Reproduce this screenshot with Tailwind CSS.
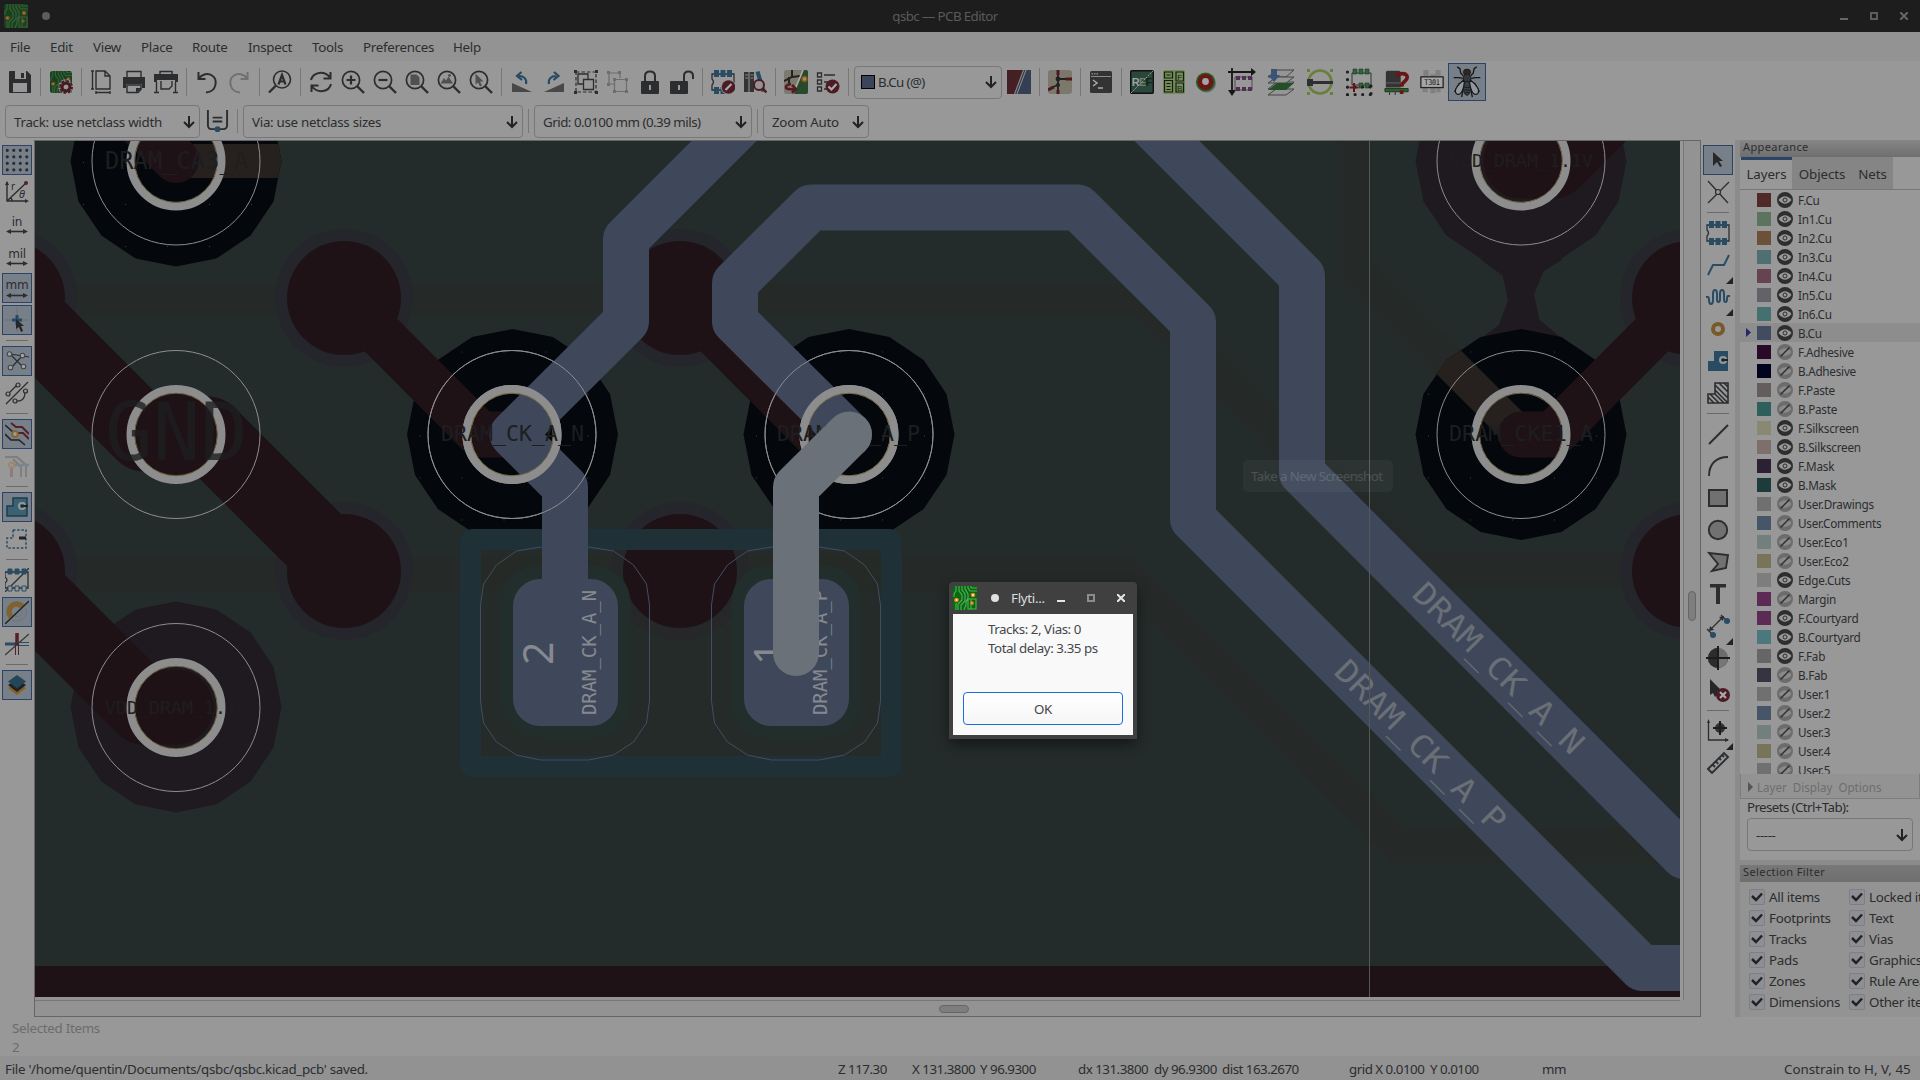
<!DOCTYPE html>
<html lang="en">
<head>
<meta charset="utf-8">
<title>qsbc — PCB Editor</title>
<script src="https://cdn.jsdelivr.net/npm/@tailwindcss/browser@4"></script>
</head>
<body class="w-[1920px] h-[1080px] overflow-hidden bg-[#989898] text-[#2b2d2f] text-[13.33px] leading-[18px] tracking-[-0.28px] font-['Noto_Sans',sans-serif] relative flex flex-col">

<svg class="hidden">
  <defs>
  <symbol id="app" viewBox="0 0 24 24"><rect width="24" height="24" rx="3" fill="#046b10"/><g fill="none" stroke="#5aab5d" stroke-width="1.1"><path d="M3 0v5l-2 3v3M6 0v5l3 4v5l-4 4v6M9 0v4l3 4v7l-4 4v5M12 0v3l3 5v4l-2 4v3l-2 5M3 17v7M15 0v2l2 3h7M18 0v2h6M15 13h8v10h-8zM18 13v10"/></g><g fill="#fff0d0" stroke="#e87d10" stroke-width="1.3"><circle cx="20" cy="9" r="1.7"/><circle cx="3.500" cy="14" r="1.700"/><circle cx="19" cy="17" r="1.200"/></g></symbol>
  <symbol id="appd" viewBox="0 0 24 24"><use href="#app"/><rect width="24" height="24" rx="3" fill="#262026" opacity=".55"/></symbol>
  <symbol id="save" viewBox="0 0 24 24"><path fill="currentColor" fill-rule="evenodd" d="M1 2q0-1 1-1h17l4 4v18H2q-1 0-1-1zM7 1v8h11V1h-5v6h3V3h-3V1zM5 13v9h14v-9z"/><path d="M7 2h11v7H7z" fill="#989898"/><path d="M13 3h3v5h-3z" fill="currentColor"/></symbol>
  <symbol id="setup" viewBox="0 0 24 24"><use href="#appd" x="1" y="1" width="22" height="22"/><circle cx="17" cy="17" r="6" fill="none" stroke="#999" stroke-width="3.500" stroke-dasharray="3.400 1.300"/><circle cx="17" cy="17" r="4" fill="none" stroke="#4c1622" stroke-width="2.600"/><circle cx="17" cy="17" r="6" fill="none" stroke="#4c1622" stroke-width="2" stroke-dasharray="2.400 2.300"/><circle cx="17" cy="17" r="2.300" fill="#999"/></symbol>
  <symbol id="page" viewBox="0 0 24 24"><g fill="none" stroke="currentColor" stroke-width="1.400"><path d="M6 1h9l5 5v13H6zM15 1v5h5M2.500 1v18M1 1h3M1 19h3M6 22.500h14M6 21v3M20 21v3"/></g></symbol>
  <symbol id="print" viewBox="0 0 24 24"><path fill="none" stroke="currentColor" stroke-width="1.400" d="M5 7V1.500h14V7M5 15v7.500h11l3-3V15z"/><path fill="currentColor" d="M1 7h22v11h-3v-4H4v4H1zM14 23v-5h6z"/></symbol>
  <symbol id="plot" viewBox="0 0 24 24"><path fill="none" stroke="currentColor" stroke-width="1.400" d="M6 5V1.500h12V5M7 11v8h8l3-3v-5M2.500 12v11M21.500 12v11M0 22.500h5M19 22.500h5"/><path fill="currentColor" d="M0 4h24v8h-3v-2H3v2H0z"/></symbol>
  <symbol id="undo" viewBox="0 0 24 24"><path fill="none" stroke="currentColor" stroke-width="2" d="M3.500 2v7h7M3.500 9C7 4 13 2.500 17 5.500c6 4 5 16-6 17"/></symbol>
  <symbol id="redo" viewBox="0 0 24 24"><g fill="none" stroke="#707070" stroke-width="2"><path d="M20.500 2v7h-7M20.500 9C17 4 11 2.500 7 5.500c-6 4-5 16 6 17"/></g></symbol>
  <symbol id="mag" viewBox="0 0 24 24"><circle cx="10" cy="10" r="8.600" fill="none" stroke="currentColor" stroke-width="1.700"/><path stroke="currentColor" stroke-width="2.400" d="M16 16l7 7"/></symbol>
  <symbol id="find" viewBox="0 0 24 24"><circle cx="14" cy="9.500" r="8.500" fill="none" stroke="currentColor" stroke-width="1.600"/><path stroke="currentColor" stroke-width="2.400" d="M8 15.500l-7 7"/><path fill="none" stroke="currentColor" stroke-width="2.200" d="M10.500 14.500L14 5l3.500 9.500M11.500 11.500h5"/></symbol>
  <symbol id="refresh" viewBox="0 0 24 24"><path fill="none" stroke="currentColor" stroke-width="2" d="M2 10C4 2 15 0 21 7.500M22 14C20 22 9 24 3 16.500M21.500 2v6.500h-7M2.500 22v-6.500h7"/></symbol>
  <symbol id="zin" viewBox="0 0 24 24"><use href="#mag"/><path stroke="currentColor" stroke-width="2.200" d="M10 5.500v9M5.500 10h9"/></symbol>
  <symbol id="zout" viewBox="0 0 24 24"><use href="#mag"/><path stroke="currentColor" stroke-width="2.200" d="M5.500 10h9"/></symbol>
  <symbol id="zfit" viewBox="0 0 24 24"><use href="#mag"/><path fill="#505050" d="M5.500 4.500h6l3 3V15h-9z"/></symbol>
  <symbol id="zobj" viewBox="0 0 24 24"><use href="#mag"/><path fill="#505050" d="M3.500 13.500l3.500-5.500 2 2.500 2.500-4 4.500 7z"/><circle cx="12.500" cy="5.500" r="1.400" fill="#505050"/></symbol>
  <symbol id="zsel" viewBox="0 0 24 24"><use href="#mag"/><path fill="#505050" d="M6.500 3.500l8 8h-3.500l2 4-2 1-2-4-2.500 2z"/></symbol>
  <symbol id="ccw" viewBox="0 0 24 24"><path fill="#484848" d="M2 13v9h20z"/><path fill="none" stroke="#264a62" stroke-width="2.200" d="M16 14c1-5-2-8-7-8M11.500 2L7 6l5 4"/></symbol>
  <symbol id="cw" viewBox="0 0 24 24"><path fill="#484848" d="M22 13v9H2z"/><path fill="none" stroke="#264a62" stroke-width="2.200" d="M7 14C6 9 9 6 14 6M12 2l4.500 4-5 4"/></symbol>
  <symbol id="group" viewBox="0 0 24 24"><path fill="none" stroke="currentColor" stroke-width="1.200" stroke-dasharray="3.500 2" d="M2 2h20v20H2z"/><path fill="none" stroke="currentColor" stroke-width="1.300" d="M9 14H4V4h10v5M9.500 9.500h10v10h-10z"/><path fill="currentColor" d="M0 0h3v3H0zM21 0h3v3h-3zM0 21h3v3H0zM21 21h3v3h-3z"/></symbol>
  <symbol id="ungroup" viewBox="0 0 24 24"><g fill="none" stroke="#6d6d6d" stroke-width="1.200"><path d="M9 14H3V3h11v5M8.500 9.500h12v12h-12z"/></g><path fill="#6d6d6d" d="M1 1h3v3H1zM12 1h3v3h-3zM1 13h3v3H1zM7 8h3v3H7zM19 8h3v3h-3zM7 20h3v3H7zM19 20h3v3h-3z"/></symbol>
  <symbol id="lock" viewBox="0 0 24 24"><rect x="3" y="11" width="18" height="13" rx="1" fill="currentColor"/><path fill="none" stroke="currentColor" stroke-width="2" d="M7 11V6q0-4.500 5-4.500T17 6v5"/><path stroke="#999" stroke-width="2" d="M12 15v5"/></symbol>
  <symbol id="unlock" viewBox="0 0 24 24"><rect x="0" y="11" width="18" height="13" rx="1" fill="currentColor"/><path fill="none" stroke="currentColor" stroke-width="2" d="M14 11V6q0-4.500 4.500-4.500T23 6v3"/><path stroke="#999" stroke-width="2" d="M9 15v5"/></symbol>
  <symbol id="fp" viewBox="0 0 24 24"><path fill="none" stroke="currentColor" stroke-width="1.300" d="M1 4h22v16H1v-5q3-3 0-6z"/><path fill="#284c63" d="M3 0h5v7H3zM9.500 0h5v7h-5zM16 0h5v7h-5zM3 17h5v7H3zM9.500 17h5v7h-5zM16 17h5v7h-5z"/></symbol>
  <symbol id="fped" viewBox="0 0 24 24"><use href="#fp"/><circle cx="17.500" cy="17" r="7.600" fill="#989898"/><circle cx="17.500" cy="17" r="6.800" fill="#4d1b26"/><path stroke="#aaa" stroke-width="2.200" d="M14.500 20l6-6"/></symbol>
  <symbol id="lib" viewBox="0 0 24 24"><path fill="#333" d="M1 2h4.500v20H1zM6.500 2H11v20H6.500z"/><path fill="#284c63" d="M12.500 2l4-1 6 20-4 1z"/><path stroke="#888" d="M2 5h3M2 8h3M7.500 5h3M7.500 8h3"/><circle cx="16" cy="15" r="5" fill="#939393" stroke="#4d1b26" stroke-width="2"/><path stroke="#4d1b26" stroke-width="2.400" d="M19.500 18.500l4 4"/></symbol>
  <symbol id="update" viewBox="0 0 24 24"><rect width="24" height="24" rx="2.500" fill="#7c7a6d"/><path d="M20 0h2q2 0 2 2v20q0 2-2 2H10z" fill="#29492b"/><path fill="none" stroke="#222" stroke-width="2" d="M8 0v7l-8 4M8 7l8-1M5 14V7"/><path stroke="#aaa" stroke-width="1.500" d="M19 0L9 24"/><circle cx="20.500" cy="9" r="2.500" fill="#9c9074" stroke="#8a5715" stroke-width="1.500"/><path fill="none" stroke="#571923" stroke-width="2.500" d="M7 14q-6 1-5 4 2 2 9 1M8 15l4 4-4 4"/></symbol>
  <symbol id="drc" viewBox="0 0 24 24"><path fill="none" stroke="currentColor" stroke-width="1.300" d="M1.500 3h4v4h-4zM1.500 10h4v4h-4zM1.500 17h4v4h-4zM8 5h11M8 12h6M8 19h3"/><circle cx="16.500" cy="16.500" r="7" fill="#4d1b26"/><path fill="none" stroke="#aaa" stroke-width="2.200" d="M12.500 16.500l3 3 5-5.500"/></symbol>
  <symbol id="pair" viewBox="0 0 24 24"><path fill="#442024" d="M0 0h17L8 24H0z"/><path fill="#343f53" d="M17 0h7v24H8z"/><path stroke="#999" stroke-width=".9" d="M16.500 0l-9 24M19 0l-9 24"/></symbol>
  <symbol id="sch" viewBox="0 0 24 24"><rect width="24" height="24" rx="3" fill="#7d786c"/><path fill="none" stroke="#222" stroke-width="1.800" d="M10 0v9h11M10 9v6L2 18M10 15v9"/><path stroke="#4f1720" stroke-width="3" d="M10 0v5M17.500 9H24M0 20l6-3M10 20v4"/><circle cx="10" cy="9" r="2.400" fill="#222"/><circle cx="10" cy="15" r="2" fill="#222"/></symbol>
  <symbol id="term" viewBox="0 0 24 24"><rect x="1" y="1" width="22" height="22" rx="1.500" fill="#333"/><path stroke="#8a8a8a" d="M2 6.500h20"/><path stroke="#999" stroke-width="1.300" stroke-dasharray="1.500 1" d="M2.500 3.800h7"/><path fill="none" stroke="#aaa" stroke-width="1.500" d="M4 10l4 3-4 3M9 18h5"/></symbol>
  <symbol id="ref" viewBox="0 0 24 24"><rect x=".7" y=".7" width="22.600" height="22.600" rx="1" fill="#29473a" stroke="#111" stroke-width="1.400"/><path stroke="#999" stroke-dasharray="2 1" d="M1 23L23 1"/><g font-size="11" font-weight="bold" font-family="Liberation Sans"><text x="1.800" y="16" fill="#a0a0a0">R</text><text x="9" y="16" fill="#6f7f77">E</text><text x="15.500" y="16" fill="#14231b">F</text></g></symbol>
  <symbol id="fb" viewBox="0 0 24 24"><rect x="1" y="0" width="22" height="24" rx="2" fill="#728d5a"/><path fill="none" stroke="#161d10" stroke-width="1.200" d="M2.500 2h8v6h-8zM2.500 10.500h8V22h-8zM14 2h7.500v9H14zM14 13h7.500v9H14zM4.500 5h4M4.500 13.500h4M4.500 16.500h4M4.500 19.500h4"/><text x="15.300" y="9.500" font-size="8" font-family="Liberation Sans" fill="#161d10">F</text><text x="15" y="20.500" font-size="8" font-family="Liberation Sans" fill="#161d10">B</text></symbol>
  <symbol id="ring" viewBox="0 0 24 24"><circle cx="12.500" cy="13" r="9.500" fill="#555" opacity=".6"/><circle cx="11.500" cy="12" r="9.600" fill="#285f25"/><circle cx="11.500" cy="12" r="8" fill="#681817"/><circle cx="11.500" cy="11.500" r="3.400" fill="#a5a5a5"/></symbol>
  <symbol id="pos" viewBox="0 0 28 28"><path stroke="#171717" stroke-width="1.800" d="M0 4h24M4 0v25"/><path fill="#171717" d="M23 0l5 4-5 4zM0 22l4 6 4-6z"/><path fill="none" stroke="#4d4d4d" d="M7 9h17v13H7z"/><path fill="#502f50" d="M8 8h4v4H8zM14 8h4v4h-4zM20 8h4v4h-4zM8 19h4v4H8zM14 19h4v4h-4zM20 19h4v4h-4z"/></symbol>
  <symbol id="layers" viewBox="0 0 28 28"><g fill="#959595" stroke="#454545"><path d="M10 2h17l-8 7H1zM1 21l9-7h17l-8 7zM1 27l8-6h18l-8 6z"/><path d="M1 15l9-6h17l-8 6z"/></g><path fill="#234f27" d="M1 22l9-7h17l-8 7z"/><path fill="#3c5378" d="M4 1h6v6h3l-6 7-6-7h3z"/></symbol>
  <symbol id="circ" viewBox="0 0 28 28"><circle cx="14" cy="14" r="11.500" fill="none" stroke="#6a7e3a" stroke-width="2.600"/><path fill="#6a7e3a" d="M1 1h3v3H1zM24 1h3v3h-3zM1 24h3v3H1zM24 24h3v3h-3z"/><path fill="#2d2f30" d="M1 11h6v2h20v3H7v2H1z"/></symbol>
  <symbol id="grid2" viewBox="0 0 28 28"><path fill="none" stroke="#333" d="M7 5h19v12H7z"/><path fill="#31623c" stroke="#1b3a24" stroke-width=".6" d="M8 1h4v5H8zM14 1h4v5h-4zM20 1h4v5h-4zM14 15h4v5h-4zM20 15h4v5h-4z"/><path stroke="#1f1f1f" stroke-width="3.200" stroke-linecap="round" stroke-dasharray="0 7.600" d="M2.500 4v24M2.500 26.500h25M26 18v9M10 19h16"/><path stroke="#611615" stroke-width="2" d="M9 15v9M4.500 19.500h9"/></symbol>
  <symbol id="cap" viewBox="0 0 28 28"><path fill="#333" d="M2 4q0-2 2-2h12q2 0 2 2v16H2z"/><path stroke="#555" stroke-width="1.500" d="M2 15h16"/><path fill="#2d5c31" stroke="#183a1b" d="M1 21h25v3.500H1z"/><path stroke="#222" d="M6 25v3M12 25v3"/><path fill="none" stroke="#6a1617" stroke-width="4" d="M14 9c0-5 11-6 11 0 0 5-6 4-6 10M19 23v4"/></symbol>
  <symbol id="t301" viewBox="0 0 28 28"><path fill="#808080" d="M4 0h6v7H4zM18 0h6v7h-6zM12 5h6v22h-6zM3 20h6v6H3zM19 20h5v6h-5z"/><rect x="1" y="8" width="26" height="12.500" fill="#a6a6a6" stroke="#222" stroke-width="1.500"/><text x="5" y="17.500" font-size="9" font-family="DejaVu Sans Mono" textLength="18" lengthAdjust="spacingAndGlyphs" fill="#111">T301</text></symbol>
  <symbol id="fly" viewBox="0 0 32 36"><g fill="none" stroke="#15181a" stroke-width="1.500"><path d="M12 11L9 8 8 3 5 1M20 11l3-3 1-5 3-2M11 14l-4-1-5 0-1 0M21 14l4-1 6 0M11 18l-4 2-5 9M21 18l4 2 5 9M11 24v6l-1 5M21 24v6l1 5"/></g><ellipse cx="16" cy="7" rx="4" ry="3.500" fill="#3a2420" stroke="#15181a"/><ellipse cx="16" cy="14" rx="4.500" ry="5" fill="#34383b" stroke="#15181a"/><ellipse cx="16" cy="25" rx="4" ry="8" fill="#3c4043" stroke="#15181a"/><path fill="#95989a" stroke="#15181a" stroke-width="1.300" d="M12 16C5 21 1 28 4 31s8-1 9-13zM20 16c7 5 11 12 8 15s-8-1-9-13z"/><path stroke="#15181a" d="M13 24h6M13 27h6M14 30h4"/></symbol>
  <symbol id="trk" viewBox="0 0 24 24"><path fill="none" stroke="currentColor" stroke-width="2" d="M2 1v16q0 4 4 4h12q4 0 4-4V1M7 9h10M7 13h10"/><circle cx="12" cy="21" r="3" fill="#264a62"/></symbol>

  <symbol id="dots" viewBox="0 0 24 24"><g stroke="currentColor" stroke-width="3.200" stroke-linecap="round" stroke-dasharray="0 6.500"><path d="M2.300 2.300h20M2.300 8.800h20M2.300 15.300h20M2.300 21.800h20"/></g></symbol>
  <symbol id="polar" viewBox="0 0 24 24"><path fill="none" stroke="currentColor" stroke-width="1.400" d="M2 2v19h20M2 21L20 4M7 21q0-3-2-3"/><path fill="currentColor" d="M0 5l2-4 2 4zM20 19l4 2-4 2z"/><circle cx="21" cy="3" r="2" fill="#57202b"/><text x="6" y="10" font-size="10" fill="currentColor">r</text><text x="14" y="18" font-size="11" font-style="italic" fill="currentColor">θ</text></symbol>
  <symbol id="arr" viewBox="0 0 24 24"><path stroke="currentColor" stroke-width="1.600" d="M4 19.500h16"/><path fill="currentColor" d="M6 17l-5 2.500L6 22zM18 17l5 2.500-5 2.500z"/></symbol>
  <symbol id="in" viewBox="0 0 24 24"><use href="#arr"/><text x="12" y="14" text-anchor="middle" font-size="12" font-family="DejaVu Sans" fill="currentColor">in</text></symbol>
  <symbol id="mil" viewBox="0 0 24 24"><use href="#arr"/><text x="12" y="14" text-anchor="middle" font-size="12" font-family="DejaVu Sans" fill="currentColor">mil</text></symbol>
  <symbol id="mm" viewBox="0 0 24 24"><use href="#arr"/><text x="12" y="13" text-anchor="middle" font-size="12" font-family="DejaVu Sans" fill="currentColor">mm</text></symbol>
  <symbol id="cur" viewBox="0 0 24 24"><path stroke="#6d7074" d="M0 12h24M12 0v24"/><path stroke="#264a62" stroke-width="3" d="M12 7v10M7 12h10"/><path fill="#252628" d="M11 11l8 7h-3l2 5-2 1-2-5-3 2z"/></symbol>
  <symbol id="rats" viewBox="0 0 24 24"><path stroke="currentColor" stroke-width="1.200" fill="none" d="M5 5l13 13M18 6L6 19M5 5l13 2 6 1"/><g fill="#a1a4a6" stroke="#44484b" stroke-width="1.100"><circle cx="4.500" cy="5" r="2.300"/><circle cx="17.500" cy="6.500" r="2.300"/><circle cx="5.500" cy="18.500" r="2.300"/><circle cx="18.500" cy="17.500" r="2.300"/></g></symbol>
  <symbol id="rats2" viewBox="0 0 24 24"><path fill="none" stroke="currentColor" stroke-width="1.200" d="M1 23L23 1M4 12L12 4M11 20q9 1 9-9"/><g fill="#989898" stroke="currentColor" stroke-width="1.200"><circle cx="3" cy="13" r="2"/><circle cx="13" cy="4" r="2"/><circle cx="10" cy="20" r="2"/><circle cx="20.500" cy="10" r="2"/></g></symbol>
  <symbol id="tracks" viewBox="0 0 24 24"><path fill="none" stroke="#552029" stroke-width="2" d="M6 1l5 4h6l7 7M12 11h6l6 6"/><path fill="none" stroke="#222" stroke-width="1.600" d="M0 3l8 7M0 12l6 6h8l6 5"/><circle cx="10" cy="12" r="2.800" fill="#999" stroke="#8a6420" stroke-width="1.800"/></symbol>
  <symbol id="fade" viewBox="0 0 24 24"><g opacity=".5"><path fill="none" stroke="#666" stroke-width="2" d="M0 3h12l9 8v12M8 5l8 8v10"/><path stroke="#5d7688" stroke-width="2.500" d="M10 11h14"/><path stroke="#8a6060" stroke-width="3" d="M6.500 12v11"/><circle cx="6.500" cy="11" r="2.500" fill="#999" stroke="#9a7a40" stroke-width="2"/></g></symbol>
  <symbol id="zone" viewBox="0 0 24 24"><path fill="#3b6272" stroke="#1d3c4e" stroke-width="1.500" d="M8 3h14v18H2V11h6z"/><circle cx="17" cy="11" r="4" fill="#999"/><circle cx="17" cy="11" r="2.200" fill="#3b6272"/><path stroke="#222" stroke-width="2.200" d="M16 11h7"/></symbol>
  <symbol id="zoneo" viewBox="0 0 24 24"><path fill="none" stroke="#284c63" stroke-width="1.500" stroke-dasharray="2.500 1.700" d="M8 3h13v18H2V11h6z"/><path stroke="#222" stroke-width="3" d="M14 11h7"/></symbol>
  <symbol id="fpo" viewBox="0 0 24 24"><path fill="none" stroke="currentColor" stroke-width="1.300" d="M0 4h23v16H0v-5q4-3 0-6zM0 24L24 0"/><path fill="#284c63" stroke="#284c63" d="M3 1h4v5H3zM10 1h4v5h-4zM17 1h4v5h-4z"/><path fill="#999" stroke="#284c63" d="M3 18h4v5H3zM10 18h4v5h-4zM17 18h4v5h-4z"/></symbol>
  <symbol id="viao" viewBox="0 0 24 24"><path fill="none" stroke="#7f6230" stroke-width="5.500" d="M6 17A7.500 7.500 0 0 1 17.500 6.500"/><path fill="none" stroke="#6d7480" d="M7 20a10 10 0 0 0 14-12M9 15a4.500 4.500 0 0 0 7-6"/><path stroke="#222" stroke-width="1.400" d="M0 24L24 1"/></symbol>
  <symbol id="trko" viewBox="0 0 24 24"><path stroke="#284c63" stroke-width="3" d="M0 12h12"/><path stroke="#552029" stroke-width="3.500" d="M12 1v12"/><path fill="none" stroke="#284c63" d="M12 10.500h12M12 13.500h12"/><path stroke="#552029" d="M10.500 12v11M13.500 12v11"/><path stroke="#333" stroke-width="1.200" d="M0 23L24 2"/></symbol>
  <symbol id="stack" viewBox="0 0 24 24"><path fill="#866123" d="M3 15l9 7 9-7-9-6z"/><path fill="#222" d="M3 12l9 7 9-7-9-6z"/><path fill="#234658" d="M3 8.500l9 7 9-7L12 2z"/></symbol>

  <symbol id="sel" viewBox="0 0 24 24"><path fill="#252729" d="M7 4l10 9h-4l3 5-2 1-3-5-4 4z"/></symbol>
  <symbol id="xnet" viewBox="0 0 24 24"><path stroke="currentColor" stroke-width="1.300" d="M2 1l20 22M23 2L2 23"/><circle cx="12" cy="12" r="2.500" fill="#989898" stroke="currentColor" stroke-width="1.200"/></symbol>
  <symbol id="route" viewBox="0 0 24 24"><path fill="none" stroke="#284c63" stroke-width="2" d="M2 22l5-10h11l5-10"/></symbol>
  <symbol id="tune" viewBox="0 0 24 24"><path fill="none" stroke="#284c63" stroke-width="2" d="M0 12h2q1 0 1 3 0 4 2 4t2-4V9q0-4 2-4t2 4v5q0 3 1.500 3t1.500-3V9q0-4 2-4t2 4v5q0 3 1.500 3t1.500-3 1-3h2"/></symbol>
  <symbol id="via" viewBox="0 0 24 24"><circle cx="12" cy="12" r="5" fill="none" stroke="#79592a" stroke-width="4"/></symbol>
  <symbol id="zn" viewBox="0 0 24 24"><path fill="#284c63" d="M8 2h14v20H2V12h6z"/><circle cx="17" cy="11" r="4" fill="#989898"/><circle cx="17" cy="11" r="2" fill="#284c63"/><path stroke="#222" stroke-width="2" d="M16 11h6"/></symbol>
  <symbol id="hatch" viewBox="0 0 24 24"><path fill="none" stroke="currentColor" stroke-width="1.600" d="M9 2h13v20H2V13h7zM9 4l13 13M13 2l9 9M18 2l4 4M9 9l13 13M4 13l9 9M2 16l6 6M9 13l9 9"/></symbol>
  <symbol id="line" viewBox="0 0 24 24"><path stroke="currentColor" stroke-width="1.900" d="M3 22L22 3"/></symbol>
  <symbol id="arc" viewBox="0 0 24 24"><path fill="none" stroke="currentColor" stroke-width="1.900" d="M3 22C3 10 10 3 22 3"/></symbol>
  <symbol id="rect" viewBox="0 0 24 24"><path fill="#717171" stroke="currentColor" stroke-width="2" d="M3 4h18v16H3z"/></symbol>
  <symbol id="cir" viewBox="0 0 24 24"><circle cx="12" cy="12" r="9.200" fill="#717171" stroke="currentColor" stroke-width="1.900"/></symbol>
  <symbol id="poly" viewBox="0 0 24 24"><path fill="#717171" stroke="currentColor" stroke-width="1.900" d="M3 3l19 2-2 13-14 3 6-7z"/></symbol>
  <symbol id="T" viewBox="0 0 24 24"><path fill="currentColor" d="M4 2h16v3.500h-6V22h-4V5.500H4z"/></symbol>
  <symbol id="dim" viewBox="0 0 24 24"><path fill="none" stroke="currentColor" stroke-width="1.300" d="M1 15l6 6M15 1l6 6M4 16L17 3"/><path fill="currentColor" d="M3 17l1-5 4 4zM18 2l-5 1 4 4z"/><circle cx="7" cy="21" r="3" fill="#284c63"/><circle cx="21" cy="7" r="3" fill="#284c63"/></symbol>
  <symbol id="org" viewBox="0 0 24 24"><circle cx="12" cy="12" r="10" fill="#777"/><path fill="#2c2c2c" d="M12 2v10H2A10 10 0 0 0 12 22V12h10A10 10 0 0 1 12 22V12H2A10 10 0 0 1 12 2z"/><path fill="#777" d="M12 2a10 10 0 0 1 10 10H12z"/><path fill="#2c2c2c" d="M12 12V2a10 10 0 0 0-10 10zM12 12H2a10 10 0 0 0 10 10z"/><path fill="#777" d="M12 12h10a10 10 0 0 1-10 10z"/><path fill="#2c2c2c" d="M12 2a10 10 0 0 1 10 10H12z" opacity=".15"/><path stroke="#1c1c1c" stroke-width="2" d="M12 0v24M0 12h24"/></symbol>
  <symbol id="del" viewBox="0 0 24 24"><path fill="#252729" d="M4 1l12 12h-5l1 3-3 3-2-4-3 2z"/><circle cx="17" cy="17" r="7" fill="#4d1b26"/><path stroke="#aaa" stroke-width="2.200" d="M14 14l6 6M20 14l-6 6"/></symbol>
  <symbol id="gorg" viewBox="0 0 24 24"><path fill="none" stroke="currentColor" stroke-width="1.300" d="M2.500 3v18H22"/><path fill="currentColor" d="M1 4l1.500-4L4 4zM19 19l4 2-4 2z"/><circle cx="14" cy="9" r="5" fill="#333"/><path stroke="#1c1c1c" stroke-width="2" d="M14 2v14M7 9h14"/></symbol>
  <symbol id="ruler" viewBox="0 0 24 24"><path fill="none" stroke="currentColor" stroke-width="1.900" d="M2 18L18 2l4 4L6 22zM7 14l2 2M10 10l2 3M13 7l2 2M16 4l2 2"/></symbol>
  <symbol id="eye1" viewBox="0 0 16 16"><circle cx="8" cy="8" r="8" fill="#2e2e2e"/><path fill="#999" d="M1.500 8q6.500-7.500 13 0-6.500 7.500-13 0z"/><circle cx="8" cy="8" r="2" fill="none" stroke="#2e2e2e" stroke-width="1"/></symbol>
  <symbol id="eye0" viewBox="0 0 16 16"><circle cx="8" cy="8" r="8" fill="#6c6c6c"/><path fill="#8a8a8a" d="M1.500 8q6.500-7.500 13 0-6.500 7.500-13 0z"/><path stroke="#2e2e2e" stroke-width="1.400" d="M3.500 12.500l9-9"/></symbol>
  <symbol id="dn" viewBox="0 0 12 14"><path fill="none" stroke="#222" stroke-width="2" d="M6 1v11M1 7l5 5 5-5"/></symbol>
  </defs>
</svg>

<!-- title bar -->
<header class="h-8 bg-[#1d1d1d] text-[#5a5a5a] flex items-center shrink-0">
  <svg class="size-6 ml-1"><use href="#appd"/></svg>
  <span class="size-2 rounded-full bg-[#5d5d5d] ml-[14px]"></span>
  <span class="flex-1 text-center tracking-[-0.6px]">qsbc — PCB Editor</span>
  <div class="flex items-center gap-[22px] mr-3">
    <span class="w-2 h-0.5 bg-[#666] mt-[6px]"></span>
    <span class="size-2 border-2 border-[#5c5c5c]"></span>
    <svg class="size-2" viewBox="0 0 8 8"><path stroke="#666" stroke-width="2" d="M0 0l8 8M8 0L0 8"/></svg>
  </div>
</header>

<!-- menu -->
<nav class="h-[29px] bg-[#939393] flex items-center pl-[10px] pt-[1px] shrink-0">
  <span class="w-10">File</span><span class="w-[43px]">Edit</span><span class="w-12">View</span><span class="w-[51px]">Place</span><span class="w-14">Route</span><span class="w-16">Inspect</span><span class="w-[51px]">Tools</span><span class="w-[90px]">Preferences</span><span>Help</span>
</nav>

<div id="tb1" class="h-[42px] flex items-center pl-1 shrink-0"></div>

<div class="h-[37px] flex items-start pt-[2px] pl-[5px] shrink-0">
  <div class="w-[195px] h-[33px] border border-[#777] rounded-sm flex items-center justify-between pl-2 pr-1"><span>Track: use netclass width</span><svg class="w-3 h-[14px]"><use href="#dn"/></svg></div>
  <svg class="size-[23px] mx-[6px] mt-1"><use href="#trk"/></svg>
  <span class="w-px h-6 bg-[#777] mt-1 ml-[2px] mr-[5px]"></span>
  <div class="w-[280px] h-[33px] border border-[#777] rounded-sm flex items-center justify-between pl-2 pr-1"><span>Via: use netclass sizes</span><svg class="w-3 h-[14px]"><use href="#dn"/></svg></div>
  <span class="w-px h-6 bg-[#777] mt-1 mx-[5px]"></span>
  <div class="w-[218px] h-[33px] border border-[#777] rounded-sm flex items-center justify-between pl-2 pr-1"><span class="tracking-[-0.5px]">Grid: 0.0100 mm (0.39 mils)</span><svg class="w-3 h-[14px]"><use href="#dn"/></svg></div>
  <span class="w-px h-6 bg-[#777] mt-1 mx-[5px]"></span>
  <div class="w-[106px] h-[33px] border border-[#777] rounded-sm flex items-center justify-between pl-2 pr-1"><span>Zoom Auto</span><svg class="w-3 h-[14px]"><use href="#dn"/></svg></div>
</div>

<main class="h-[877px] flex shrink-0">
  <aside id="lt" class="w-[34px] flex flex-col items-center pt-1 shrink-0"></aside>
  <section class="w-[1667px] border-l border-t border-r border-b border-[#666] bg-[#939393] flex flex-col">
    <div class="flex h-[859px]">
      <svg class="w-[1645px] h-[856px] shrink-0 bg-[#242c2b] tracking-normal" viewBox="35 141 1645 856">
        <defs>
          <pattern id="gd" x="75" y="169" width="42" height="42" patternUnits="userSpaceOnUse"><rect width="1" height="1" fill="#3a3f43"/></pattern>
          <polygon id="oct" points="105.5,0 97.5,40.4 74.6,74.6 40.4,97.5 0,105.5 -40.4,97.5 -74.6,74.6 -97.5,40.4 -105.5,0 -97.5,-40.4 -74.6,-74.6 -40.4,-97.5 0,-105.5 40.4,-97.5 74.6,-74.6 97.5,-40.4"/>
          <clipPath id="cp"><use href="#oct" x="176" y="161"/><use href="#oct" x="1521" y="434.500"/></clipPath>
          <g id="vr" fill="none"><circle r="84" stroke="#8d8d8d" stroke-width="1"/><circle r="45.500" stroke="#8d8d8d" stroke-width="8"/><circle r="41.300" stroke="#756a45" stroke-width=".9"/></g>
        </defs>
        <!-- inner layer tracks -->
        <g fill="none" stroke="#252a28" stroke-width="35"><path d="M0 299H1143L1414 569.500H1720M0 574.500H1127L1399 846H1720M1354 100V268L1521 434"/></g>
        <!-- clearance rings -->
        <g fill="#24262b"><circle cx="8" cy="298" r="69"/><circle cx="8" cy="571" r="69"/><circle cx="344" cy="298" r="69"/><circle cx="344" cy="571" r="69"/><circle cx="680" cy="298" r="69"/><circle cx="680" cy="571" r="69"/><circle cx="1689" cy="298" r="69"/><circle cx="1689" cy="571" r="69"/></g>
        <rect x="481" y="550" width="400" height="206" fill="#282a26" opacity=".3"/>
        <!-- power plane islands -->
        <g fill="#1f1a20"><use href="#oct" x="176" y="707"/><use href="#oct" x="1521" y="161"/><path d="M1480 259L1502.700 275.700 1508 300.300 1499 324.700 1485 335.300V345H1560L1558.300 335.300 1539.300 319.700 1534 294 1543.700 271.300 1563 259z"/></g>
        <g fill="#04070c"><use href="#oct" x="176" y="161"/><use href="#oct" x="512.500" y="434.500"/><use href="#oct" x="849" y="434.500"/><use href="#oct" x="1521" y="434.500"/></g>
        <g fill="url(#gd)"><use href="#oct" x="176" y="161"/><use href="#oct" x="512.500" y="434.500"/><use href="#oct" x="849" y="434.500"/><use href="#oct" x="1521" y="434.500"/></g>
        <g clip-path="url(#cp)" fill="none" stroke="#26211f" stroke-width="34"><path d="M176 161H300M1400 313.500L1521 434.500"/></g>
        <!-- front copper -->
        <g fill="#1f1217"><circle cx="8" cy="298" r="57"/><circle cx="8" cy="571" r="57"/><circle cx="344" cy="298" r="57"/><circle cx="344" cy="571" r="57"/><circle cx="680" cy="298" r="57"/><circle cx="680" cy="571" r="57"/><circle cx="1689" cy="298" r="57"/><circle cx="1689" cy="571" r="57"/><path d="M35 966H1680V997H35z"/></g>
        <g fill="none" stroke="#1f1217" stroke-linecap="round" stroke-linejoin="round">
          <path stroke-width="75" d="M8 298L144 434H208L344 570M8 571L144 707H176M1521 161H1553L1689 25"/>
          <path stroke-width="46" d="M100 84L176 160M344 298L480 434.500H512M680 298L816 434.500H849M1689 298L1553 434.500H1521"/>
        </g>
        <circle cx="176" cy="434" r="41" fill="#1f1217"/>
        <!-- courtyard -->
        <rect x="470.500" y="539.500" width="421" height="227" rx="2" fill="none" stroke="#1f3037" stroke-width="21" stroke-linejoin="round"/>
        <g fill="#222e2b"><rect x="500.500" y="566" width="130" height="172" rx="36"/><rect x="731.500" y="566" width="130" height="172" rx="36"/></g>
        <g fill="none" stroke="#434d60"><path id="cy" d="M480.500 605l3-21 13-19 20-14 24-4h48l25 4 20 14 13 19 3 21v96l-3 22-13 19-20 13-25 5h-48l-24-5-20-13-13-19-3-22z"/><use href="#cy" x="231"/></g>
        <use href="#vr" x="176" y="161"/><use href="#vr" x="176" y="434.500"/><use href="#vr" x="176" y="707.500"/><use href="#vr" x="1521" y="161"/><use href="#vr" x="1521" y="434.500"/>
        <use href="#vr" x="512" y="434.500"/><use href="#vr" x="849" y="434.500"/>
        <!-- back copper -->
        <g fill="#3e485a"><rect x="513" y="579" width="105" height="147" rx="27"/><rect x="744" y="579" width="105" height="147" rx="27"/></g>
        <g fill="none" stroke="#3e485a" stroke-width="46" stroke-linecap="round" stroke-linejoin="round">
          <path d="M765 100L626 239V321.500L512.500 434.500 565 487V620"/>
          <path d="M849 434.500L735 321.500V283L811 207.500H1078L1193 322V519L1642 968H1720"/>
          <path d="M1100 74L1302 276V473L1684 856H1720"/>
        </g>
        <g fill="none" stroke="#8d8d8d"><circle cx="512" cy="434.500" r="84"/><circle cx="849" cy="434.500" r="84"/><circle cx="512" cy="434.500" r="45.500" stroke-width="8"/><circle cx="849" cy="434.500" r="45.500" stroke-width="8"/></g>
        <g fill="none" stroke="#756a45" stroke-width=".9"><circle cx="512" cy="434.500" r="41.300"/><circle cx="849" cy="434.500" r="41.300"/></g>
        <g font-family="'DejaVu Sans Mono', monospace" fill="#1d1e20">
          <text x="105" y="168.500" font-size="24" textLength="143" lengthAdjust="spacingAndGlyphs">DRAM_CA3_A</text>
          <text x="105" y="460" font-size="80" textLength="143" lengthAdjust="spacingAndGlyphs" opacity=".8">GND</text>
          <text x="105" y="713.500" font-size="18.500" textLength="143" lengthAdjust="spacingAndGlyphs">VDD_DRAM_1.1V</text>
          <text x="1450" y="167" font-size="18.500" textLength="143" lengthAdjust="spacingAndGlyphs">VDD_DRAM_1.1V</text>
          <text x="1449" y="441" font-size="21.500" textLength="144" lengthAdjust="spacingAndGlyphs">DRAM_CKE1_A</text>
          <text x="441" y="441" font-size="21.500" textLength="143" lengthAdjust="spacingAndGlyphs">DRAM_CK_A_N</text>
          <text x="777" y="441" font-size="21.500" textLength="143" lengthAdjust="spacingAndGlyphs">DRAM_CK_A_P</text>
        </g>
        <g font-family="'DejaVu Sans Mono', monospace" fill="#868a90">
          <text transform="translate(596 715) rotate(-90)" font-size="20" textLength="125" lengthAdjust="spacingAndGlyphs">DRAM_CK_A_N</text>
          <text transform="translate(827 715) rotate(-90)" font-size="20" textLength="125" lengthAdjust="spacingAndGlyphs">DRAM_CK_A_P</text>
          <text transform="translate(553 665) rotate(-90)" font-size="41" font-family="'Noto Sans', sans-serif">2</text>
          <text transform="translate(784 665) rotate(-90)" font-size="41" font-family="'Noto Sans', sans-serif">1</text>
        </g>
        <path d="M849 434.500L796 487V653" fill="none" stroke="#6a7178" stroke-width="46" stroke-linecap="round" stroke-linejoin="round"/>
        <g font-family="'DejaVu Sans Mono', monospace" fill="#6a6f76" font-size="31.500">
          <text transform="translate(1410.500 595.500) rotate(45)" textLength="227" lengthAdjust="spacingAndGlyphs">DRAM_CK_A_N</text>
          <text transform="translate(1332.500 673) rotate(45)" textLength="227" lengthAdjust="spacingAndGlyphs">DRAM_CK_A_P</text>
        </g>
        <path d="M1369.500 141V997" stroke="#555857"/>
        <rect x="1243" y="460" width="150" height="32" rx="5" fill="#fff" opacity=".04"/>
        <text x="1251" y="481" font-size="13.300" textLength="132" fill="#fff" opacity=".14" font-family="'Noto Sans', sans-serif">Take a New Screenshot</text>
      </svg>
      <div class="w-[3px] bg-[#989898]"></div>
      <div class="flex-1 border-l border-[#777] pt-[450px] pl-1"><div class="w-2 h-[30px] rounded-full border border-[#666] bg-[#7e7e7e]"></div></div>
    </div>
    <div class="h-[16px] w-[1645px] border-t border-[#777] pt-1 pl-[904px]"><div class="w-[30px] h-2 rounded-full border border-[#666] bg-[#7e7e7e]"></div></div>
  </section>
  <aside id="rt" class="w-[34px] flex flex-col items-center pt-1 shrink-0"></aside>
  <span class="w-[5px] bg-[#8b8b8b]"></span>
  <aside class="w-[180px] flex flex-col overflow-hidden shrink-0">
    <div class="h-[17px] bg-linear-to-b from-[#868686] to-[#6f6f6f] pl-[3px] text-[11px] leading-[14px] tracking-[0.4px]">Appearance</div>
    <div class="h-[33px] flex border-b border-[#777] tracking-[-0.1px] shrink-0">
      <div class="w-[51px] border-t-3 border-[#2c4368] ml-px text-center pt-[5px]">Layers</div>
      <div class="w-[60px] bg-[#858585] text-center pt-[8px]">Objects</div>
      <div class="w-[41px] bg-[#858585] text-center pt-[8px]">Nets</div>
    </div>
    <div id="ly" class="h-[584px] overflow-hidden shrink-0"></div>
    <div class="h-[25px] border border-[#7d7d7d] border-t-0 bg-[#939393] text-[#6e6e6e] flex items-center gap-1 pl-[7px] pt-[2px] tracking-[0] shrink-0"><svg class="w-[5px] h-[10px]" viewBox="0 0 5 10"><path fill="#555" d="M0 0l5 5-5 5z"/></svg><span class="origin-left scale-x-[0.87] whitespace-nowrap">Layer&nbsp; Display&nbsp; Options</span></div>
    <div class="pl-[7px] h-[19px] leading-[16px] tracking-[-0.6px] shrink-0">Presets (Ctrl+Tab):</div>
    <div class="mx-[7px] h-[33px] border border-[#777] rounded-sm flex items-center justify-between pl-2 pr-1 shrink-0"><span class="tracking-[-0.4px]">-----</span><svg class="w-3 h-[14px]"><use href="#dn"/></svg></div>
    <div class="h-[5px] bg-[#8b8b8b] mt-[9px] shrink-0"></div>
    <div class="h-[17px] bg-linear-to-b from-[#787878] to-[#6f6f6f] pl-[3px] text-[11px] leading-[14px] tracking-[0.4px] shrink-0">Selection Filter</div>
    <div id="sf" class="bg-[#939393] flex-1 grid grid-cols-[100px_100px] auto-rows-[21px] pl-[9px] pt-[4px]"></div>
  </aside>
</main>

<section class="h-[39px] text-[#6c6c6c] pl-3 pt-[2px] leading-[19px] shrink-0"><div>Selected Items</div><div>2</div></section>
<footer class="h-6 bg-[#929292] flex items-center pl-[5px] pt-[2px] whitespace-nowrap tracking-[-0.5px] *:shrink-0 shrink-0">
  <span class="w-[833px] tracking-[-0.28px]">File '/home/quentin/Documents/qsbc/qsbc.kicad_pcb' saved.</span>
  <span class="w-[74px]">Z 117.30</span><span class="w-[68px]">X 131.3800</span><span class="w-[98px]">Y 96.9300</span><span class="w-[76px]">dx 131.3800</span><span class="w-[68px]">dy 96.9300</span><span class="w-[127px]">dist 163.2670</span><span class="w-[81px]">grid X 0.0100</span><span class="w-[112px]">Y 0.0100</span><span class="w-[242px]">mm</span><span class="tracking-[0]">Constrain to H, V, 45</span>
</footer>

<!-- delay dialog -->
<div class="absolute left-[949px] top-[582px] w-[188px] h-[157px] bg-[#404040] rounded-t-sm shadow-[0_6px_14px_rgba(0,0,0,0.45)] flex flex-col px-1 pb-1">
  <div class="h-8 flex items-center text-[#dcdcdc] shrink-0">
    <svg class="size-6"><use href="#app"/></svg>
    <span class="size-2 rounded-full bg-[#e0e0e0] ml-[14px] mr-3"></span>
    <span class="w-[46px]">Flyti...</span>
    <span class="w-2 h-0.5 bg-[#e6e6e6] mt-[6px]"></span>
    <span class="size-2 border-2 border-[#8c8c8c] ml-[22px]"></span>
    <svg class="size-2 ml-[22px]" viewBox="0 0 8 8"><path stroke="#e6e6e6" stroke-width="2" d="M0 0l8 8M8 0L0 8"/></svg>
  </div>
  <div class="bg-[#f9f9f9] flex-1 flex flex-col text-[#454749] px-[10px] pt-[6px] pb-[10px]">
    <div class="pl-[25px] leading-[19px] flex-1 whitespace-nowrap"><div class="tracking-[-0.45px]"><span class="tracking-[-0.45px]">Tracks: 2, Vias: 0</span></div><div class="tracking-[-0.45px]">Total delay: 3.35 ps</div></div>
    <button class="h-[33px] border border-[#1a6fe0] rounded-sm bg-linear-to-b from-white to-[#f6f6f6]">OK</button>
  </div>
</div>

<script>
const ic = (n, c) => `<svg class="${c}"><use href="#${n}"/></svg>`;
const top1 = 'save | setup | page print plot | undo redo | find | refresh zin zout zfit zobj zsel | ccw cw group ungroup lock unlock | fped lib | update drc | LAYER pair | sch | term | ref fb ring'.split(' ');
document.getElementById('tb1').innerHTML = top1.map(n =>
  n === '|' ? '<div class="w-[9px] h-7 flex justify-center"><span class="w-px bg-[#777]"></span></div>' :
  n === 'LAYER' ? '<div class="w-[148px] ml-px mr-px h-[33px] border border-[#777] rounded-sm flex items-center pl-[6px] pr-1"><span class="size-[14px] bg-[#3b455a] border border-black mr-[3px]"></span><span class="flex-1 tracking-[-0.6px]">B.Cu (@)</span>' + ic('dn', 'w-3 h-[14px]') + '</div>' :
  '<div class="w-8 flex justify-center">' + ic(n, 'size-6') + '</div>').join('')
  + ['pos', 'layers', 'circ', 'grid2'].map(n => '<div class="w-[39px] flex justify-center">' + ic(n, 'size-7') + '</div>').join('')
  + '<div class="w-[37px] flex justify-center">' + ic('cap', 'size-[26px]') + '</div><div class="w-[33px] flex justify-center">' + ic('t301', 'size-6') + '</div>'
  + '<div class="w-[38px] h-[38px] bg-[#777f88] border border-[#2c4368] flex justify-center items-center">' + ic('fly', 'w-8 h-8') + '</div>';

const side = (id, s) => document.getElementById(id).innerHTML = s.split(' ').map(n => {
  if (n === '|') return '<div class="h-[9px] w-[22px] flex items-center shrink-0"><span class="h-px w-full bg-[#6a6a6a]"></span></div>';
  const on = n[0] === '*', fly = n.endsWith('+'), k = n.replace('*', '').replace('+', '');
  return '<div class="h-8 flex items-center shrink-0"><div class="' + (on ? 'size-[30px] border border-[#2c4368] bg-[#777f88] flex items-center justify-center relative' : 'size-[30px] flex items-center justify-center relative') + '">' + ic(k, 'size-6') + (fly ? '<svg class="absolute right-0 -bottom-1 size-[7px]" viewBox="0 0 7 7"><path fill="#222" d="M7 0v7H0z"/></svg>' : '') + '</div></div>';
}).join('');
side('lt', '*dots polar in mil *mm *cur | *rats rats2 | *tracks fade | *zone zoneo | fpo *viao trko | *stack');
side('rt', '*sel xnet | fp route+ tune+ via zn hatch | line arc rect cir poly T dim+ org del | gorg+ ruler');

const layers = [['F.Cu','#4f2a29',1],['In1.Cu','#5c7360',1],['In2.Cu','#6a5138',1],['In3.Cu','#506f70',1],['In4.Cu','#654350',1],['In5.Cu','#636269',1],['In6.Cu','#44706f',1],['B.Cu','#414c60',1],['F.Adhesive','#2a0a29',0],['B.Adhesive','#02031f',0],['F.Paste','#635d5d',0],['B.Paste','#2e5f5c',0],['F.Silkscreen','#898870',1],['B.Silkscreen','#7f6f6c',1],['F.Mask','#2b2133',1],['B.Mask','#1d3b3a',1],['User.Drawings','#707070',0],['User.Comments','#475569',0],['User.Eco1','#737f7c',0],['User.Eco2','#78745a',0],['Edge.Cuts','#7d7d7d',1],['Margin','#5b2a55',0],['F.Courtyard','#5b2a55',1],['B.Courtyard','#4b777d',1],['F.Fab','#666666',1],['B.Fab','#353541',0],['User.1','#707070',0],['User.2','#475569',0],['User.3','#737f7c',0],['User.4','#78745a',0],['User.5','#707070',0]];
document.getElementById('ly').innerHTML = layers.map(([n, c, v]) =>
  '<div class="' + (n === 'B.Cu' ? 'h-[19px] flex items-center bg-[#8d8d8d]' : 'h-[19px] flex items-center') + '"><span class="w-[17px] pl-[6px]">' +
  (n === 'B.Cu' ? '<svg class="w-[5px] h-[9px]" viewBox="0 0 5 9"><path fill="#24276a" d="M0 0l5 4.500-5 4.500z"/></svg>' : '') +
  '</span><span class="size-[14px] mr-[6px]" style="background:' + c + '"></span>' + ic(v ? 'eye1' : 'eye0', 'size-4 mr-[5px]') + '<span class="origin-left scale-x-[0.88]">' + n + '</span></div>').join('');

document.getElementById('sf').innerHTML = ['All items','Locked items','Footprints','Text','Tracks','Vias','Pads','Graphics','Zones','Rule Areas','Dimensions','Other items'].map(t =>
  '<div class="flex items-center whitespace-nowrap"><span class="size-4 rounded-xs border border-[#7c7e88] bg-[#8d8f94] mr-1 flex items-center justify-center shrink-0"><svg class="w-3 h-[10px]" viewBox="0 0 12 10"><path fill="none" stroke="#222" stroke-width="2.500" d="M1 4l4 4 6-6.500"/></svg></span>' + t + '</div>').join('');
</script>
</body>
</html>
